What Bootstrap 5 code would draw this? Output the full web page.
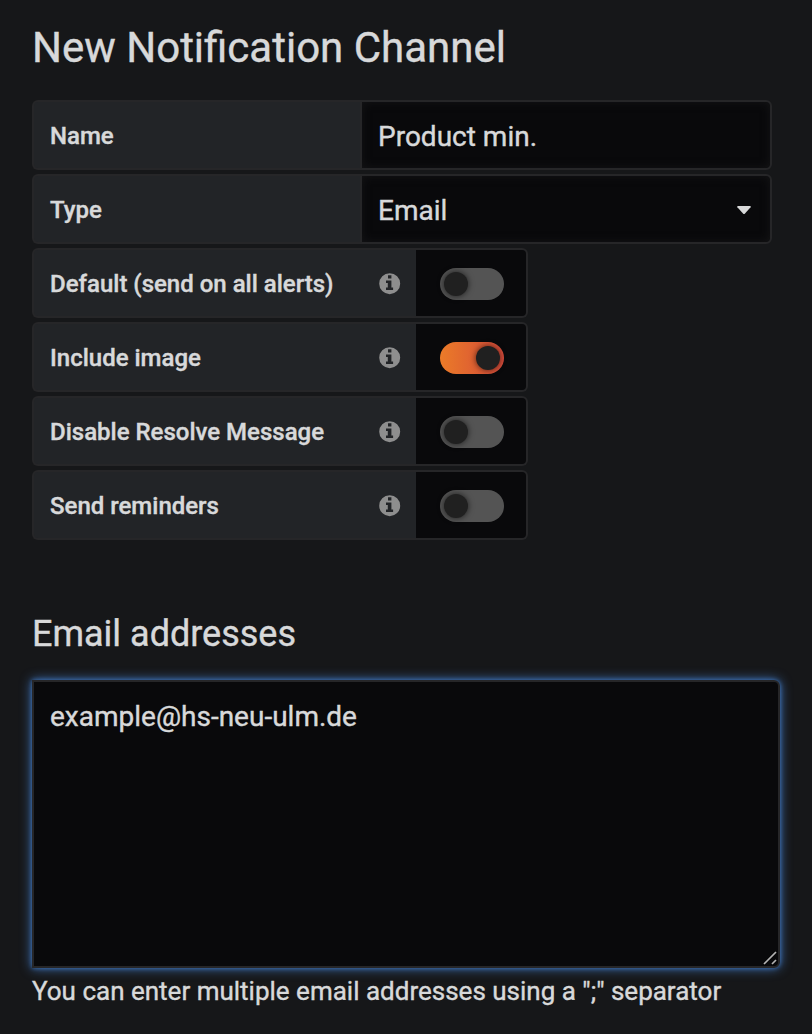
<!DOCTYPE html>
<html lang="en">
<head>
<meta charset="utf-8">
<meta name="viewport" content="width=device-width, initial-scale=1">
<title>New Notification Channel</title>
<link href="https://cdn.jsdelivr.net/npm/bootstrap@5.3.0/dist/css/bootstrap.min.css" rel="stylesheet">
<style>
body{background:#161719;color:#d8d9da;font-family:Roboto,sans-serif;font-size:28px;line-height:42px;overflow:hidden;-webkit-text-stroke:.4px #d8d9da}
.page{padding:21px 32px 0}
.page-title{font-size:42px;line-height:54px;font-weight:400;margin:0 0 25px}
.section-title{font-size:36px;line-height:46px;font-weight:400;margin:71px 0 23px}
.rows{gap:4px}
.field-row{height:70px}
.field-label{width:328px;background:#222427;border:2px solid #262628;border-right:0;border-radius:6px 0 0 6px;padding:2px 16px 0;font-size:24px;font-weight:500}
.field-label.wide{width:384px;padding-right:15px}
.info-icon{width:22px;height:22px;fill:#8e8e8e}
.field-box,.field-box:focus{width:412px;height:70px;background-color:#09090b;color:#d8d9da;border:2px solid #262628;border-radius:0 6px 6px 0;font-size:28px;line-height:42px;padding:13px 16px 11px;box-shadow:inset 0 0 10px #151517;-webkit-text-stroke:.4px #d8d9da}
select.field-box{appearance:none;padding-top:14px;padding-bottom:10px;background-image:url("data:image/svg+xml,%3Csvg xmlns='http://www.w3.org/2000/svg' viewBox='0 0 14 8'%3E%3Cpath d='M.9 0h12.2q1 .2.5 1.2L8 7.4q-1 1-2 0L.4 1.2Q-.1.2.9 0z' fill='%23d8d9da'/%3E%3C/svg%3E");background-size:14px 8px;background-position:right 19px top 30px;background-repeat:no-repeat}
.switch-box{width:112px;background:#09090b;border:2px solid #262628;border-left:0;border-radius:0 6px 6px 0;padding-top:2px}
.switch-track{width:64px;height:32px;border-radius:16px;background:#545454;margin-right:-1px;padding:4px}
.switch-track::before{content:"";display:block;width:24px;height:24px;border-radius:50%;background:#202020;box-shadow:0 0 6px #000a}
.switch-track.on{background:linear-gradient(90deg,#eb7b28,#d44a3a)}
.switch-track.on::before{margin-left:auto}
.mail-wrap{width:748px;height:288px}
.mail-box,.mail-box:focus{height:288px;background:#09090b;color:#d8d9da;border:2px solid #262628;border-radius:0 6px 6px 0;font-size:28px;line-height:42px;padding:14px 16px;resize:none;box-shadow:0 0 12px #4479c4,0 0 4px #33649f;-webkit-text-stroke:.4px #d8d9da}
.grip{right:3px;bottom:3px;width:14px;height:14px}
.hint{font-size:26px;line-height:42px;margin-top:2px;white-space:nowrap}
</style>
</head>
<body>
<svg class="d-none"><symbol id="info" viewBox="0 0 22 22"><path fill-rule="evenodd" d="M10.700 .2a10.500 10.500 0 1 0 0 21 10.500 10.500 0 0 0 0-21zM9 2.300h3.400v3.200H9zM7 7.400h5.400v7h1.700v2.700H7v-2.700h1.800v-4.300H7z"/></symbol></svg>
<main class="page">
<h1 class="page-title">New Notification Channel</h1>
<form class="rows d-flex flex-column">
<div class="field-row d-flex"><label class="field-label d-flex align-items-center" for="name">Name</label><input id="name" class="field-box form-control" value="Product min."></div>
<div class="field-row d-flex"><label class="field-label d-flex align-items-center" for="type">Type</label><select id="type" class="field-box form-control"><option>Email</option></select></div>
<div class="field-row d-flex"><div class="field-label wide d-flex align-items-center justify-content-between"><span>Default (send on all alerts)</span><svg class="info-icon"><use href="#info"/></svg></div><div class="switch-box d-flex align-items-center justify-content-center"><div class="switch-track"></div></div></div>
<div class="field-row d-flex"><div class="field-label wide d-flex align-items-center justify-content-between"><span>Include image</span><svg class="info-icon"><use href="#info"/></svg></div><div class="switch-box d-flex align-items-center justify-content-center"><div class="switch-track on"></div></div></div>
<div class="field-row d-flex"><div class="field-label wide d-flex align-items-center justify-content-between"><span>Disable Resolve Message</span><svg class="info-icon"><use href="#info"/></svg></div><div class="switch-box d-flex align-items-center justify-content-center"><div class="switch-track"></div></div></div>
<div class="field-row d-flex"><div class="field-label wide d-flex align-items-center justify-content-between"><span>Send reminders</span><svg class="info-icon"><use href="#info"/></svg></div><div class="switch-box d-flex align-items-center justify-content-center"><div class="switch-track"></div></div></div>
</form>
<h3 class="section-title">Email addresses</h3>
<div class="mail-wrap position-relative">
<textarea class="mail-box form-control" aria-label="Email addresses" spellcheck="false">example@hs-neu-ulm.de</textarea>
<svg class="grip position-absolute" viewBox="0 0 14 14" stroke="#b4b4b4" stroke-width="1.700"><path d="M1 13 13 1M9 13l4-4"/></svg>
</div>
<div class="hint">You can enter multiple email addresses using a ";" separator</div>
</main>
<script src="https://cdn.jsdelivr.net/npm/bootstrap@5.3.0/dist/js/bootstrap.bundle.min.js"></script>
</body>
</html>
